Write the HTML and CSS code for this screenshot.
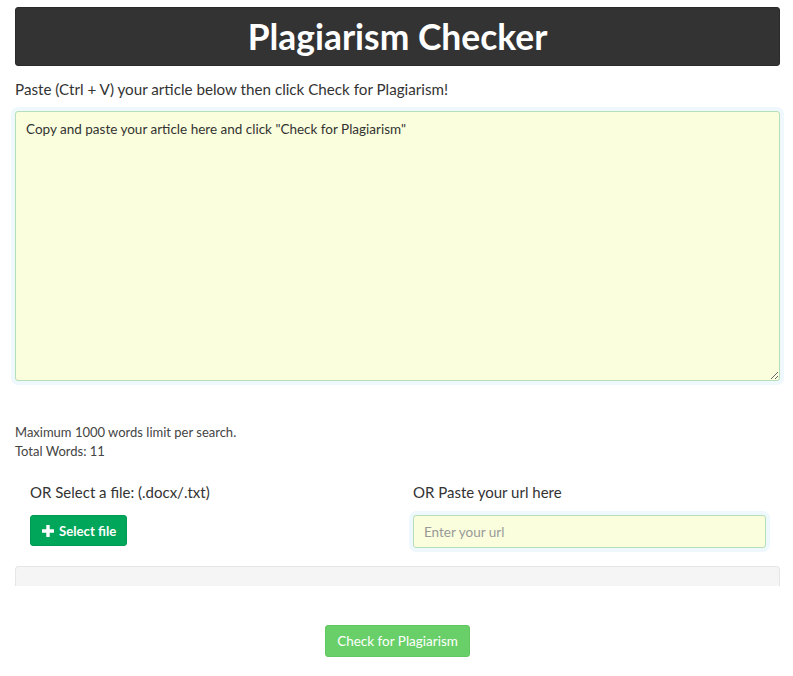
FILE: index.html
```html
<!DOCTYPE html>
<html>
<head>
<meta charset="utf-8">
<link rel="stylesheet" href="styles.css">
</head>
<body>
<div class="page">
  <div class="header"><h1 class="title">Plagiarism Checker</h1></div>
  <p class="intro">Paste (Ctrl + V) your article below then click Check for Plagiarism!</p>
  <textarea class="article">Copy and paste your article here and click "Check for Plagiarism"</textarea>
  <div class="limits">
    <div>Maximum 1000 words limit per search.</div>
    <div>Total Words: 11</div>
  </div>
  <div class="row">
    <div class="col">
      <div class="label">OR Select a file: (.docx/.txt)</div>
      <button class="btn-file"><svg class="plus" viewBox="0 0 12 12" width="12" height="12"><path d="M4.3 0h3.4v4.3H12v3.4H7.7V12H4.3V7.7H0V4.3h4.3z" fill="#fff"/></svg>Select file</button>
    </div>
    <div class="col">
      <div class="label">OR Paste your url here</div>
      <input class="url" type="text" placeholder="Enter your url">
    </div>
  </div>
  <div class="well"></div>
  <div class="actions"><button class="btn-check">Check for Plagiarism</button></div>
</div>
</body>
</html>
```
FILE: styles.css
```css
html, body {
  margin: 0;
  padding: 0;
  background: #fff;
}
body {
  font-family: Lato, "Open Sans", sans-serif;
  color: #333;
}
.page {
  width: 765px;
  margin-left: 15px;
  padding-top: 7px;
}
.header {
  background: #333;
  border: 1px solid #2a2a2a;
  border-radius: 3px;
  height: 57px;
  display: flex;
  align-items: center;
  justify-content: center;
}
.title {
  margin: 0;
  color: #fff;
  font-size: 35.4px;
  font-weight: 700;
  line-height: 1;
}
.intro {
  margin: 13px 0 12px;
  font-size: 15.2px;
  line-height: 20px;
}
.article {
  display: block;
  box-sizing: border-box;
  width: 765px;
  height: 270px;
  margin: 0;
  padding: 8px 10px;
  background: #fafedc;
  border: 1px solid #b5dfba;
  border-radius: 3px;
  box-shadow: 0 0 0 4px #eff9fd;
  font-family: inherit;
  font-size: 13.5px;
  line-height: 18px;
  color: #333;
  resize: vertical;
  outline: none;
}
.limits {
  margin-top: 42px;
  font-size: 13px;
  line-height: 19px;
  color: #444;
}
.row {
  display: flex;
  margin-top: 21px;
}
.col {
  flex: 1;
  padding: 0 15px;
}
.col + .col {
  padding-left: 16px;
  padding-right: 14px;
}
.label {
  font-size: 15px;
  line-height: 20px;
  margin-bottom: 13px;
}
.btn-file {
  display: inline-flex;
  align-items: center;
  gap: 5px;
  height: 31px;
  padding: 0 10px 0 11px;
  background: #00a65a;
  border: 1px solid #009a53;
  border-radius: 3px;
  color: #fff;
  font-family: inherit;
  font-size: 13.2px;
  font-weight: 700;
}
.plus {
  display: block;
}
.url {
  display: block;
  box-sizing: border-box;
  width: 353px;
  height: 33px;
  margin: 0;
  padding: 0 10px;
  background: #fafedc;
  border: 1px solid #b5dfba;
  border-radius: 3px;
  box-shadow: 0 0 0 4px #eff9fd;
  font-family: inherit;
  font-size: 13.5px;
  color: #333;
  outline: none;
}
.url::placeholder {
  color: #999;
}
.well {
  box-sizing: border-box;
  height: 20px;
  margin-top: 18px;
  background: #f5f5f5;
  border: 1px solid #e6e6e6;
  border-bottom: none;
  border-radius: 4px 4px 0 0;
}
.actions {
  display: flex;
  justify-content: center;
  margin-top: 39px;
}
.btn-check {
  height: 32px;
  width: 145px;
  background: #69cf68;
  border: 1px solid #62c661;
  border-radius: 3px;
  color: #fff;
  font-family: inherit;
  font-size: 13.5px;
}
```
